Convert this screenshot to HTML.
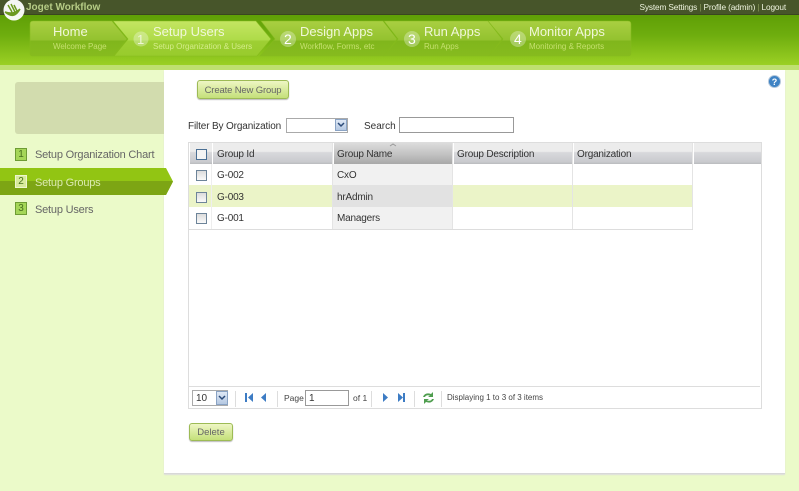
<!DOCTYPE html>
<html><head><meta charset="utf-8"><style>
html,body{margin:0;padding:0}
body{width:799px;height:491px;overflow:hidden;position:relative;background:#ebfac9;font-family:"Liberation Sans",sans-serif;font-size:10px;color:#444}
.a{position:absolute;white-space:nowrap}
.cb{position:absolute;left:196px;width:9px;height:9px;border:1px solid #6d8499;background:linear-gradient(#dcdcdc,#fafafa)}
.th{position:absolute;top:143px;height:21px;background:linear-gradient(#ececec 0,#ececec 40%,#d8d9dc 45%,#c9cace 90%,#b9babd 100%);border-left:1px solid #fff}
.t{position:absolute;white-space:nowrap;font-size:10px;color:#333;letter-spacing:-.2px}
.btn{position:absolute;box-sizing:border-box;border:1px solid #9dbb55;border-radius:3px;background:linear-gradient(#eef6c4,#c4e07a);color:#666;text-align:center;font-size:9.500px;box-shadow:0 1px 1px #bbb}
.sep{position:absolute;top:391px;width:1px;height:16px;background:#ddd}
.n{position:absolute;left:15px;width:10px;height:11px;background:#a5d658;border:1px solid #6e9c34;font-size:10px;text-align:center;line-height:11px;color:#47701c}
.s{position:absolute;white-space:nowrap;left:35px;font-size:11px;color:#666;letter-spacing:-.2px}
</style></head><body>
<div class="a" style="left:0;top:0;width:799px;height:14px;background:#47552a;border-bottom:1px solid #3a4620"></div>
<div class="a" style="left:0;top:15px;width:799px;height:50px;background:linear-gradient(#5f9f06,#6ead0e 40%,#9bd024)"></div>
<div class="a" style="left:0;top:65px;width:799px;height:5px;background:#bfe070"></div>
<svg class="a" style="left:0;top:0" width="799" height="70">
<defs>
<linearGradient id="g1" x1="0" y1="0" x2="0" y2="1"><stop offset="0" stop-color="#a9cf42"/><stop offset=".55" stop-color="#93c22e"/><stop offset=".56" stop-color="#80b61c"/><stop offset="1" stop-color="#86bb1e"/></linearGradient>
<linearGradient id="g2" x1="0" y1="0" x2="0" y2="1"><stop offset="0" stop-color="#c4e562"/><stop offset=".55" stop-color="#aedb48"/><stop offset=".56" stop-color="#9ecf34"/><stop offset="1" stop-color="#98cb2c"/></linearGradient>
</defs>
<g stroke="#86bb1e" stroke-width=".6">
<path d="M33 21H112L127 39 113 56H33Q30 56 30 53V24Q30 21 33 21Z" fill="url(#g1)"/>
<path d="M261 21H383L397 39 384 56H260L275 39Z" fill="url(#g1)"/>
<path d="M384 21H488L502 39 489 56H384L398 39Z" fill="url(#g1)"/>
<path d="M488 21H628Q631 21 631 24V53Q631 56 628 56H489L503 39Z" fill="url(#g1)"/>
<path d="M113 21H256L271 39 257 56H114L128 39Z" fill="url(#g2)"/>
</g>
<circle cx="14" cy="10" r="10.500" fill="#fff" opacity=".95"/>
<path d="M5 12Q14 20 20 9Q14 15 5 12ZM8 5L12 12M11 4L15 12M14 5L17 11" stroke="#6d9a20" stroke-width="1.500" fill="#6d9a20"/>
<circle cx="141" cy="39" r="7.500" fill="#fff" opacity=".3"/>
<circle cx="288" cy="39" r="8" fill="#fff" opacity=".3"/>
<circle cx="412" cy="39" r="8" fill="#fff" opacity=".3"/>
<circle cx="518" cy="39" r="8" fill="#fff" opacity=".3"/>
</svg>
<div class="a" style="left:26px;top:2px;font-weight:bold;font-size:10px;color:#b6cc86">Joget Workflow</div>
<div class="a" style="right:13px;top:2px;font-size:8.300px;color:#eef3df;letter-spacing:-.15px">System Settings <span style="color:#8a9a60">|</span> Profile (admin) <span style="color:#8a9a60">|</span> Logout</div>
<div class="a" style="left:53px;top:24px;font-size:13px;color:#f1f7da">Home</div>
<div class="a" style="left:53px;top:42px;font-size:8px;color:#c5e06e;letter-spacing:-.05px">Welcome Page</div>
<div class="a" style="left:153px;top:24px;font-size:13px;color:#f1f7da">Setup Users</div>
<div class="a" style="left:153px;top:42px;font-size:8px;color:#d4ec8a">Setup Organization &amp; Users</div>
<div class="a" style="left:300px;top:24px;font-size:13px;color:#f1f7da">Design Apps</div>
<div class="a" style="left:300px;top:42px;font-size:8px;color:#c5e06e">Workflow, Forms, etc</div>
<div class="a" style="left:424px;top:24px;font-size:13px;color:#f1f7da">Run Apps</div>
<div class="a" style="left:424px;top:42px;font-size:8px;color:#c5e06e">Run Apps</div>
<div class="a" style="left:529px;top:24px;font-size:13px;color:#f1f7da">Monitor Apps</div>
<div class="a" style="left:529px;top:42px;font-size:8px;color:#c5e06e">Monitoring &amp; Reports</div>
<div class="a" style="left:137px;top:32px;font-size:13px;color:#eef5d5">1</div>
<div class="a" style="left:284px;top:31px;font-size:14px;color:#fff">2</div>
<div class="a" style="left:408px;top:31px;font-size:14px;color:#fff">3</div>
<div class="a" style="left:514px;top:31px;font-size:14px;color:#fff">4</div>

<div class="a" style="left:164px;top:70px;width:621px;height:403px;background:#fff;border-bottom:1px solid #d8d8d8;box-shadow:0 1px 1px #ddd"></div>
<div class="a" style="left:15px;top:82px;width:149px;height:52px;background:#d2dcae;border-radius:3px 0 0 3px"></div>

<svg class="a" style="left:0;top:168px" width="175" height="28"><path d="M0 0H166L173 13.500 166 27H0Z" fill="#92c513"/><path d="M0 13H172L173 13.500 166 27H0Z" fill="#7da514"/></svg>
<div class="n" style="top:148px">1</div>
<div class="n" style="top:175px;background:#d8eb9c;border-color:#eef6d0">2</div>
<div class="n" style="top:202px">3</div>
<div class="s" style="top:149px">Setup Organization Chart</div>
<div class="s" style="top:177px;color:#dcebb0">Setup Groups</div>
<div class="s" style="top:204px">Setup Users</div>

<div class="btn" style="left:197px;top:80px;width:92px;height:19px;line-height:19px;letter-spacing:-.15px">Create New Group</div>
<svg class="a" style="left:768px;top:75px" width="13" height="13"><circle cx="6.500" cy="6.500" r="6" fill="#3f83c4" stroke="#b4c8dc"/><text x="6.500" y="10" font-size="9" font-weight="bold" fill="#fff" text-anchor="middle" font-family="Liberation Sans">?</text></svg>

<div class="a" style="left:188px;top:121px;font-size:10px;color:#333;letter-spacing:-.14px">Filter By Organization</div>
<div class="a" style="left:286px;top:118px;width:60px;height:13px;border:1px solid #aaa;background:#fff"></div>
<div class="a" style="left:335px;top:119px;width:12px;height:12px;background:linear-gradient(#dfe8f5,#b5c8e2);border:1px solid #8aa3c4;box-sizing:border-box"><svg width="10" height="10" style="display:block"><path d="M2 3L5 6 8 3" stroke="#2b4a78" stroke-width="1.500" fill="none"/></svg></div>
<div class="a" style="left:364px;top:121px;font-size:10px;color:#333">Search</div>
<div class="a" style="left:399px;top:117px;width:113px;height:14px;border:1px solid #999;background:#fff"></div>

<!-- grid -->
<div class="a" style="left:188px;top:142px;width:574px;height:267px;border:1px solid #ddd;box-sizing:border-box"></div>
<div class="th" style="left:189px;width:22px"></div>
<div class="th" style="left:212px;width:120px"></div>
<div class="th" style="left:333px;width:119px;background:linear-gradient(#dcdcdc,#c4c4c4 50%,#a8a8a8)"></div>
<div class="th" style="left:453px;width:119px"></div>
<div class="th" style="left:573px;width:119px"></div>
<div class="th" style="left:693px;width:67px"></div>
<div class="a" style="left:189px;top:185px;width:503px;height:22px;background:#ebf4c8"></div>
<div class="a" style="left:333px;top:164px;width:119px;height:65px;background:#f1f1f1"></div>
<div class="a" style="left:333px;top:185px;width:119px;height:22px;background:#e2e2e2"></div>
<div class="a" style="left:189px;top:229px;width:504px;height:1px;background:#ddd"></div>
<div class="a" style="left:211px;top:164px;width:1px;height:65px;background:#eee"></div>
<div class="a" style="left:332px;top:143px;width:1px;height:86px;background:#e4e4e4"></div>
<div class="a" style="left:452px;top:143px;width:1px;height:86px;background:#e4e4e4"></div>
<div class="a" style="left:572px;top:143px;width:1px;height:86px;background:#e4e4e4"></div>
<div class="a" style="left:692px;top:143px;width:1px;height:86px;background:#e4e4e4"></div>
<svg class="a" style="left:389px;top:142px" width="8" height="5"><path d="M1 4L4 2 7 4" stroke="#999" fill="none"/></svg>
<div class="cb" style="top:149px;border-color:#4a6f94;background:#f4f4f4"></div>
<div class="cb" style="top:170px"></div>
<div class="cb" style="top:192px"></div>
<div class="cb" style="top:213px"></div>
<div class="t" style="left:217px;top:149px">Group Id</div>
<div class="t" style="left:337px;top:149px">Group Name</div>
<div class="t" style="left:457px;top:149px">Group Description</div>
<div class="t" style="left:577px;top:149px">Organization</div>
<div class="t" style="left:217px;top:170px">G-002</div>
<div class="t" style="left:337px;top:170px">CxO</div>
<div class="t" style="left:217px;top:192px">G-003</div>
<div class="t" style="left:337px;top:192px">hrAdmin</div>
<div class="t" style="left:217px;top:213px">G-001</div>
<div class="t" style="left:337px;top:213px">Managers</div>

<div class="a" style="left:189px;top:386px;width:571px;height:1px;background:#ddd"></div>
<div class="a" style="left:192px;top:390px;width:34px;height:14px;border:1px solid #aaa;background:#fff;font-size:10px;line-height:15px;text-indent:3px;color:#333">10</div>
<div class="a" style="left:216px;top:391px;width:12px;height:14px;background:linear-gradient(#dfe8f5,#b5c8e2);border:1px solid #8aa3c4;box-sizing:border-box"><svg width="10" height="12" style="display:block"><path d="M2 4L5 7 8 4" stroke="#2b4a78" stroke-width="1.500" fill="none"/></svg></div>
<div class="sep" style="left:235px"></div>
<div class="sep" style="left:277px"></div>
<div class="sep" style="left:371px"></div>
<div class="sep" style="left:414px"></div>
<div class="sep" style="left:441px"></div>
<svg class="a" style="left:240px;top:390px" width="200" height="16">
<path d="M5 3h2v9H5zM13 3V12L8 7.500Z" fill="#3d7cc4"/><path d="M26 3V12L21 7.500Z" fill="#3d7cc4"/>
<path d="M143 3V12L148 7.500Z" fill="#3d7cc4"/><path d="M158 3V12L163 7.500Z M163 3h2v9h-2z" fill="#3d7cc4"/>
<path d="M183 7Q185 2 191 4L193 2V7H188L190 5.500Q186 4.500 185 7ZM194 9Q192 14 186 12L184 14V9H189L187 10.500Q191 11.500 192 9Z" fill="#4f9e4f"/>
</svg>
<div class="a" style="left:284px;top:393px;font-size:8.500px;color:#444">Page</div>
<div class="a" style="left:305px;top:390px;width:42px;height:14px;border:1px solid #999;background:#fff;font-size:10px;line-height:16px;text-indent:3px;color:#333">1</div>
<div class="a" style="left:353px;top:393px;font-size:8.500px;color:#444">of 1</div>
<div class="a" style="left:447px;top:393px;font-size:8px;color:#444">Displaying 1 to 3 of 3 items</div>

<div class="btn" style="left:189px;top:423px;width:44px;height:18px;line-height:18px">Delete</div>
</body></html>
